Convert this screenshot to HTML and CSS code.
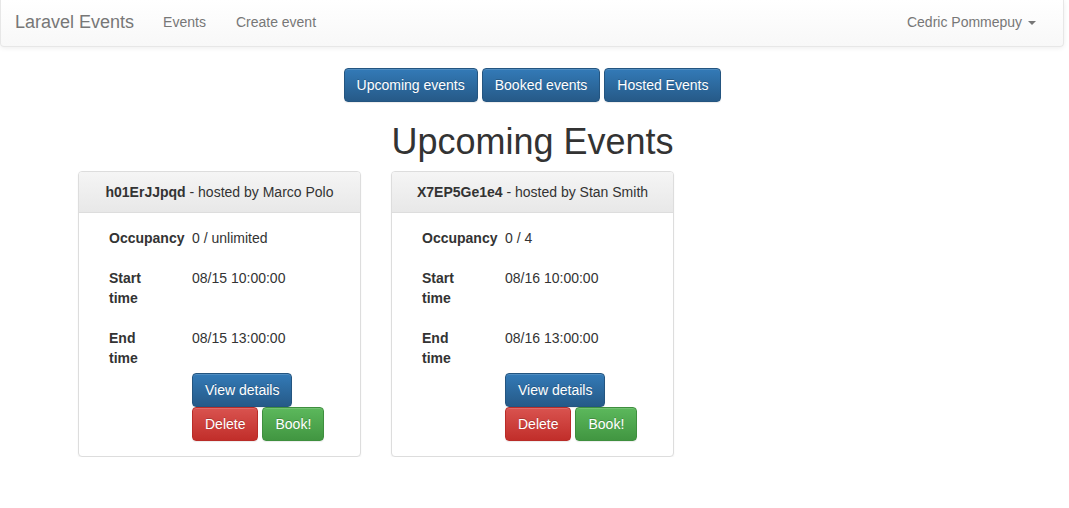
FILE: index.html
```html
<!DOCTYPE html>
<html>
<head>
<meta charset="utf-8">
<title>Laravel Events</title>
<link rel="stylesheet" href="styles.css">
</head>
<body>
<div class="page">
  <nav class="navbar">
    <div class="nav-left">
      <a class="brand" href="#">Laravel Events</a>
      <a class="nav-link" href="#">Events</a>
      <a class="nav-link" href="#">Create event</a>
    </div>
    <div class="nav-right">
      <a class="nav-link" href="#">Cedric Pommepuy <span class="caret"></span></a>
    </div>
  </nav>

  <div class="tabs">
    <a class="btn btn-primary" href="#">Upcoming events</a>
    <a class="btn btn-primary" href="#">Booked events</a>
    <a class="btn btn-primary" href="#">Hosted Events</a>
  </div>

  <h1 class="title">Upcoming Events</h1>

  <div class="events">
    <div class="card">
      <div class="card-head"><strong>h01ErJJpqd</strong> - hosted by Marco Polo</div>
      <div class="card-body">
        <div class="details">
          <div class="label">Occupancy</div><div class="value">0 / unlimited</div>
          <div class="label">Start time</div><div class="value">08/15 10:00:00</div>
          <div class="label last">End time</div><div class="value last">08/15 13:00:00</div>
          <div class="actions">
            <div class="action-row"><a class="btn btn-primary" href="#">View details</a></div>
            <div class="action-row"><a class="btn btn-danger" href="#">Delete</a><a class="btn btn-success" href="#">Book!</a></div>
          </div>
        </div>
      </div>
    </div>
    <div class="card">
      <div class="card-head"><strong>X7EP5Ge1e4</strong> - hosted by Stan Smith</div>
      <div class="card-body">
        <div class="details">
          <div class="label">Occupancy</div><div class="value">0 / 4</div>
          <div class="label">Start time</div><div class="value">08/16 10:00:00</div>
          <div class="label last">End time</div><div class="value last">08/16 13:00:00</div>
          <div class="actions">
            <div class="action-row"><a class="btn btn-primary" href="#">View details</a></div>
            <div class="action-row"><a class="btn btn-danger" href="#">Delete</a><a class="btn btn-success" href="#">Book!</a></div>
          </div>
        </div>
      </div>
    </div>
  </div>
</div>
</body>
</html>
```
FILE: styles.css
```css
* { box-sizing: border-box; }
html, body { margin: 0; padding: 0; background: #fff; }
body {
  font-family: "Liberation Sans", Arial, Helvetica, sans-serif;
  font-size: 14px;
  line-height: 20px;
  color: #333;
}
a { text-decoration: none; }

.page { width: 1065px; }

.navbar {
  width: 1064px;
  height: 47px;
  display: flex;
  justify-content: space-between;
  padding: 0 12px 0 14px;
  background: linear-gradient(to bottom, #fff 0%, #f8f8f8 100%);
  border: 1px solid #e7e7e7;
  border-top: none;
  border-radius: 0 0 4px 4px;
  box-shadow: inset 0 1px 0 rgba(255,255,255,.15), 0 1px 5px rgba(0,0,0,.075);
}
.nav-left, .nav-right { display: flex; }
.brand {
  display: block;
  padding: 12px 14px 0 0;
  font-size: 18px;
  line-height: 20px;
  color: #777;
}
.nav-link {
  display: block;
  padding: 12px 15px 0;
  line-height: 20px;
  color: #777;
}
.caret {
  display: inline-block;
  width: 0;
  height: 0;
  margin-left: 2px;
  vertical-align: middle;
  border-top: 4px solid #777;
  border-left: 4px solid transparent;
  border-right: 4px solid transparent;
}

.tabs {
  display: flex;
  justify-content: center;
  gap: 4px;
  margin-top: 21px;
}

.btn {
  display: inline-block;
  padding: 6px 12px;
  font-size: 14px;
  line-height: 20px;
  color: #fff;
  text-align: center;
  border: 1px solid transparent;
  border-radius: 4px;
  text-shadow: 0 -1px 0 rgba(0,0,0,.2);
  box-shadow: inset 0 1px 0 rgba(255,255,255,.15), 0 1px 1px rgba(0,0,0,.075);
  white-space: nowrap;
}
.btn-primary {
  background: linear-gradient(to bottom, #337ab7 0%, #265a88 100%);
  border-color: #245580;
}
.btn-danger {
  background: linear-gradient(to bottom, #d9534f 0%, #c12e2a 100%);
  border-color: #b92c28;
}
.btn-success {
  background: linear-gradient(to bottom, #5cb85c 0%, #419641 100%);
  border-color: #3e8f3e;
}

.title {
  margin: 20px 0 10px;
  font-size: 36px;
  line-height: 39px;
  font-weight: 500;
  text-align: center;
  color: #333;
}

.events {
  display: flex;
  gap: 30px;
  padding-left: 78px;
}
.card {
  width: 283px;
  border: 1px solid #ddd;
  border-radius: 4px;
  box-shadow: 0 1px 2px rgba(0,0,0,.05);
  background: #fff;
}
.card-head {
  padding: 10px 15px;
  text-align: center;
  border-bottom: 1px solid #ddd;
  border-radius: 3px 3px 0 0;
  background: linear-gradient(to bottom, #f5f5f5 0%, #e8e8e8 100%);
}
.card-body { padding: 15px; }
.details {
  display: grid;
  grid-template-columns: 76px 1fr;
  column-gap: 7px;
  padding: 0 15px;
}
.label {
  font-weight: bold;
  width: min-content;
  margin-bottom: 20px;
}
.value { margin-bottom: 20px; }
.label.last, .value.last { margin-bottom: 0; }
.actions {
  grid-column: 2;
  margin-top: 5px;
}
.action-row { display: flex; gap: 4px; }
```
